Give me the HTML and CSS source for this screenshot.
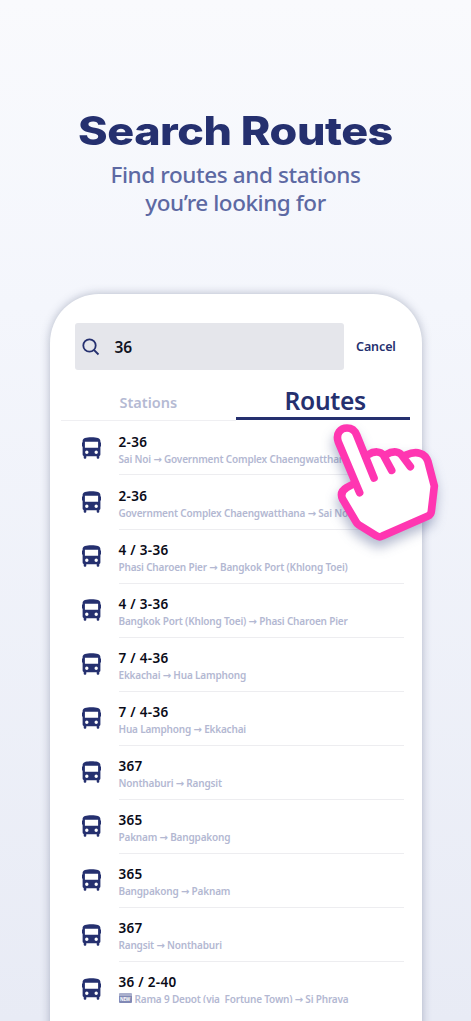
FILE: index.html
```
<!DOCTYPE html>
<html lang="en">
<head>
<meta charset="utf-8">
<title>Search Routes</title>
<link rel="stylesheet" href="styles.css">
</head>
<body>
<svg class="defs" width="0" height="0" aria-hidden="true">
  <symbol id="bus" viewBox="0 0 19 22">
    <path fill-rule="evenodd" d="M.6 4C.6 1.200 4 .3 9.500 .3S18.400 1.200 18.400 4V17.500Q18.400 18.600 17.300 19V20.500Q17.300 21.700 16.200 21.700H15.700Q14.700 21.700 14.700 20.500V19.300H4.300V20.500Q4.300 21.700 3.300 21.700H2.800Q1.700 21.700 1.700 20.500V19Q.6 18.600 .6 17.500ZM2.900 4.700V10.700H16.100V4.700ZM4.800 13.500A1.700 1.700 0 1 0 4.800 16.900A1.700 1.700 0 1 0 4.800 13.500ZM14.200 13.500A1.700 1.700 0 1 0 14.200 16.900A1.700 1.700 0 1 0 14.200 13.500Z"/>
    <path d="M0 5.500H1V9.500H0ZM18 5.500H19V9.500H18Z"/>
  </symbol>
</svg>
<main class="page">
  <header class="hero">
    <h1 class="title">Search Routes</h1>
    <p class="tagline"><span>Find routes and stations</span><span class="second">you’re looking for</span></p>
  </header>
  <section class="phone">
    <div class="search">
      <div class="field">
        <svg class="lens" viewBox="0 0 18 18"><circle cx="7.500" cy="7.500" r="6.200"/><path d="M12 12l4.500 4.500"/></svg>
        <span class="query">36</span>
      </div>
      <span class="cancel">Cancel</span>
    </div>
    <nav class="tabs">
      <span class="tab">Stations</span>
      <span class="tab active"><span>Routes</span></span>
    </nav>
    <ul class="list">
      <li class="row"><svg class="bus"><use href="#bus"/></svg><div class="info"><b>2-36</b><small>Sai Noi <i class="to">→</i> Government Complex Chaengwatthana</small></div></li>
      <li class="row"><svg class="bus"><use href="#bus"/></svg><div class="info"><b>2-36</b><small>Government Complex Chaengwatthana <i class="to">→</i> Sai Noi</small></div></li>
      <li class="row"><svg class="bus"><use href="#bus"/></svg><div class="info"><b>4 / 3-36</b><small>Phasi Charoen Pier <i class="to">→</i> Bangkok Port (Khlong Toei)</small></div></li>
      <li class="row"><svg class="bus"><use href="#bus"/></svg><div class="info"><b>4 / 3-36</b><small>Bangkok Port (Khlong Toei) <i class="to">→</i> Phasi Charoen Pier</small></div></li>
      <li class="row"><svg class="bus"><use href="#bus"/></svg><div class="info"><b>7 / 4-36</b><small>Ekkachai <i class="to">→</i> Hua Lamphong</small></div></li>
      <li class="row"><svg class="bus"><use href="#bus"/></svg><div class="info"><b>7 / 4-36</b><small>Hua Lamphong <i class="to">→</i> Ekkachai</small></div></li>
      <li class="row"><svg class="bus"><use href="#bus"/></svg><div class="info"><b>367</b><small>Nonthaburi <i class="to">→</i> Rangsit</small></div></li>
      <li class="row"><svg class="bus"><use href="#bus"/></svg><div class="info"><b>365</b><small>Paknam <i class="to">→</i> Bangpakong</small></div></li>
      <li class="row"><svg class="bus"><use href="#bus"/></svg><div class="info"><b>365</b><small>Bangpakong <i class="to">→</i> Paknam</small></div></li>
      <li class="row"><svg class="bus"><use href="#bus"/></svg><div class="info"><b>367</b><small>Rangsit <i class="to">→</i> Nonthaburi</small></div></li>
      <li class="row"><svg class="bus"><use href="#bus"/></svg><div class="info"><b>36 / 2-40</b><small><i class="new">NEW</i>Rama 9 Depot (via&nbsp; Fortune Town) <i class="to">→</i> Si Phraya</small></div></li>
    </ul>
  </section>
  <svg class="hand" viewBox="0 0 480 450">
    <path class="palm" d="M179 248L115 96C106 70 122 54 141 54C154 54 165 62 170 75L204 134Q226 122 248 131L260 134Q286 118 306 135L320 134C350 121 376 129 384 155L403 228L394 304Q393 314 384 318L247 378Q238 383 229 377L177 345Q171 341 168 335L128 268C120 251 128 240 140 233L160 222Z"/>
    <path d="M179 248L115 96C106 70 122 54 141 54C154 54 165 62 170 75L222 204M204 134C224 122 242 124 250 135L275 181M258 134C281 120 300 125 307 138L331 170M318 135C350 121 376 129 384 155L403 228L394 304Q393 314 384 318L247 378Q238 383 229 377L177 345Q171 341 168 335L128 268C120 251 128 240 140 233L160 222"/>
  </svg>
</main>
</body>
</html>
```
FILE: styles.css
```
* { box-sizing: border-box; }
body {
  margin: 0;
  font-family: "Noto Sans", "Open Sans", sans-serif;
  color: #25306f;
}
.defs { position: absolute; }
.page {
  position: relative;
  height: 1021px;
  overflow: hidden;
  background: linear-gradient(#f9fafd, #f4f6fc 30%, #e8ebf5);
}
.hero {
  height: 294px;
  padding-top: 106px;
  text-align: center;
  white-space: nowrap;
}
.title {
  margin: 0;
  font: 850 39px/50px Inter, sans-serif;
  letter-spacing: -.4px;
  transform: scaleX(1.15);
}
.tagline {
  display: flex;
  flex-direction: column;
  margin: 5px 0 0;
  font-size: 22.5px;
  font-weight: 500;
  line-height: 28px;
  letter-spacing: -.4px;
  color: #5d69a3;
}
.second { letter-spacing: -.45px; }
.phone {
  width: 371.500px;
  height: 800px;
  margin-left: 50px;
  padding: 29px 11px 0;
  border-radius: 49px;
  background: #fff;
  box-shadow: 0 0 10px rgba(55, 65, 100, .35);
}
.search {
  display: flex;
  align-items: center;
  gap: 12px;
  height: 47px;
  padding-left: 14px;
}
.field {
  display: flex;
  align-items: center;
  gap: 14.500px;
  width: 269px;
  height: 47px;
  padding-left: 7px;
  border-radius: 3px;
  background: #e5e6eb;
  color: #111322;
}
.query {
  font-size: 15.500px;
  font-weight: 600;
  line-height: 22px;
}
.lens {
  width: 18px;
  height: 18px;
  fill: none;
  stroke: #25306f;
  stroke-width: 1.8;
}
.cancel { font-size: 12.500px; font-weight: 600; letter-spacing: -.1px; }
.tabs { display: flex; height: 51px; }
.tab {
  width: 174.500px;
  padding-top: 16px;
  border-bottom: 1px solid #efeff2;
  text-align: center;
  font-size: 14.500px;
  font-weight: 600;
  line-height: 32px;
  color: #b5bad3;
}
.active {
  padding: 15px 0 0 5px;
  height: 50px;
  border-bottom: 3px solid #25306f;
  font-size: 24.600px;
  font-weight: 600;
  letter-spacing: -.3px;
  color: #25306f;
}
.list {
  height: 582px;
  margin: 0;
  padding: .4px 7px 0 21px;
  overflow: hidden;
  list-style: none;
}
.row { display: flex; height: 54.070px; gap: 17.500px; }
.bus { width: 19px; height: 22px; margin-top: 15.600px; fill: #25306f; }
.info {
  flex: 1;
  padding-top: 11.400px;
  border-bottom: 1px solid #ededf0;
  white-space: nowrap;
}
.info b {
  display: block;
  font-size: 13.500px;
  font-weight: 600;
  line-height: 19px;
  letter-spacing: .3px;
  color: #0a0b18;
}
.info small {
  display: block;
  font-size: 10px;
  font-weight: 600;
  line-height: 15px;
  letter-spacing: -.18px;
  color: #b3b8d2;
}
.to { font: 700 10px/10px "DejaVu Sans", sans-serif; }
.new {
  display: inline-block;
  width: 13px;
  height: 10px;
  margin: 1px 3px 0 0;
  border-radius: 1px;
  background: linear-gradient(#a9afcd 25%, #8189b5 25%);
  color: #fff;
  font: 700 4.500px/12px "Noto Sans", sans-serif;
  text-align: center;
  vertical-align: top;
}
.hand {
  position: absolute;
  left: 300px;
  top: 410px;
  width: 160px;
  height: 150px;
  overflow: visible;
  fill: none;
  stroke: #ff36b1;
  stroke-width: 23;
  stroke-linecap: round;
  stroke-linejoin: round;
  filter: drop-shadow(-1px 7px 6px rgba(55, 70, 125, .38));
}
.palm { fill: #fff; stroke: none; }
```
